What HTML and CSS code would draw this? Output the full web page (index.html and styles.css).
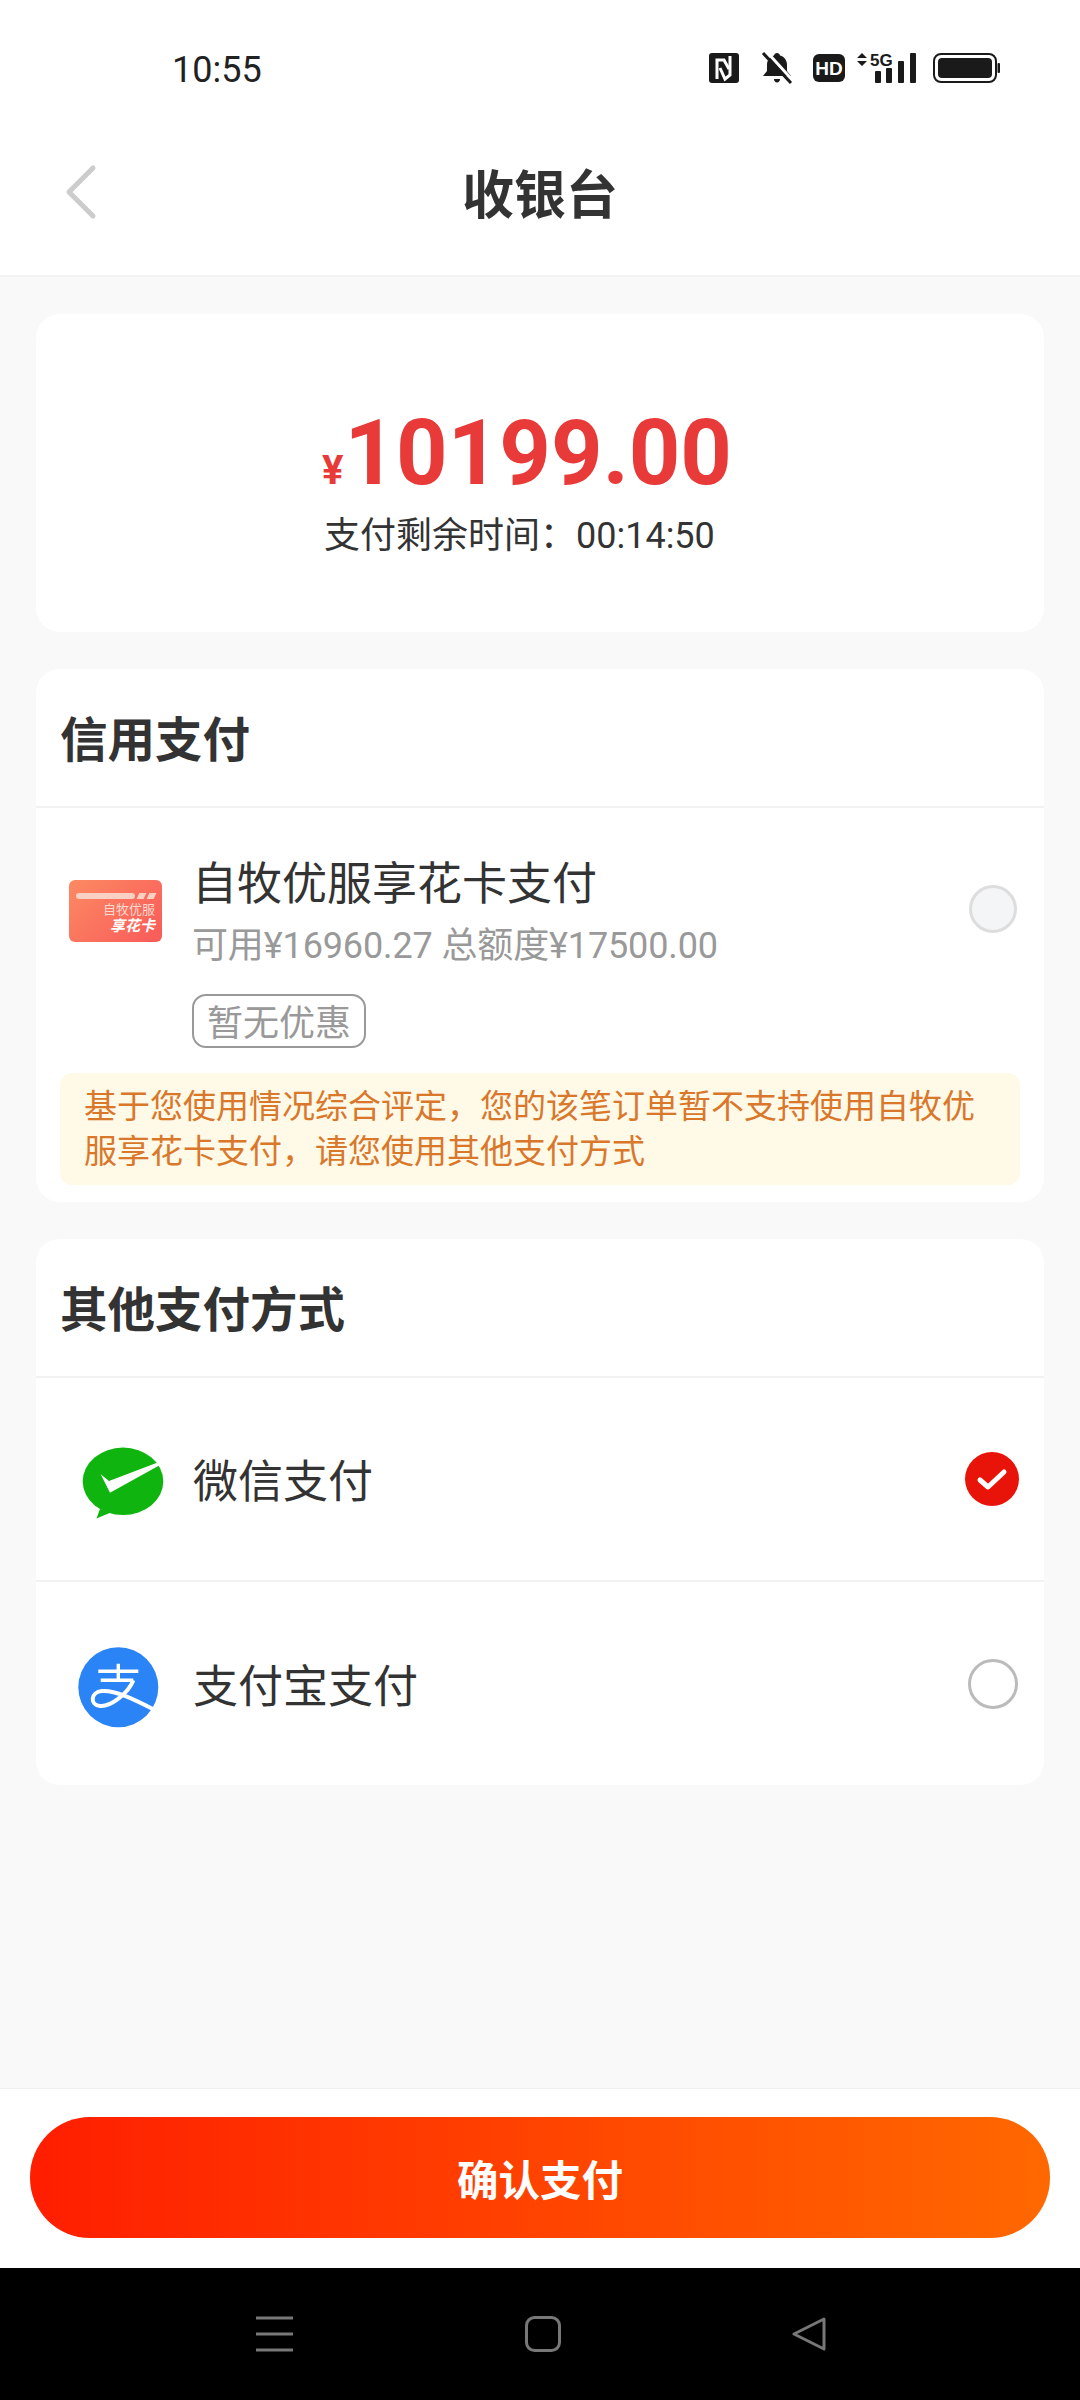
FILE: index.html
```html
<!DOCTYPE html>
<html lang="zh-CN">
<head>
  <meta charset="UTF-8">
  <meta name="viewport" content="width=device-width, initial-scale=1.0">
  <title>收银台</title>
  <link rel="stylesheet" href="styles.css">
</head>
<body>
  <div class="page">
    <div class="status-bar">
      <span class="clock">10:55</span>
      <div class="status-icons">
        <svg class="icon-nfc" width="30" height="30" viewBox="0 0 30 30">
          <rect width="30" height="30" rx="3" fill="#1a1a1a"/>
          <path d="M8 26V7h7l5 9" fill="none" stroke="#fff" stroke-width="3"/>
          <path d="M21 3v19l-5 4-5-11" fill="none" stroke="#fff" stroke-width="3"/>
        </svg>
        <svg class="icon-bell" width="32" height="32" viewBox="0 0 32 32">
          <path d="M16 1c1.600 0 2.700 1 3 2.500 4.500 1 7 5 7 9.500v6l4 5H2l4-5v-6c0-4.500 2.500-8.500 7-9.500C13.300 2 14.400 1 16 1z" fill="#1a1a1a"/>
          <path d="M13 27h6c0 2.200-1.300 3.500-3 3.500S13 29.200 13 27z" fill="#1a1a1a"/>
          <path d="M5 -1l29 32" stroke="#fff" stroke-width="3"/>
          <path d="M2 1l28 30" stroke="#1a1a1a" stroke-width="3"/>
        </svg>
        <svg class="icon-hd" width="32" height="28" viewBox="0 0 32 28">
          <rect width="32" height="28" rx="6" fill="#1a1a1a"/>
          <text x="16" y="20.500" text-anchor="middle" class="hd-text">HD</text>
        </svg>
        <svg class="icon-signal" width="60" height="38" viewBox="0 -4 60 38">
          <path d="M0 5l5-5 5 5zM0 8l5 5 5-5z" fill="#1a1a1a"/>
          <text x="13" y="13" class="net-text">5G</text>
          <rect x="18" y="18" width="6" height="12" rx="1" fill="#1a1a1a"/>
          <rect x="29" y="15" width="6" height="15" rx="1" fill="#1a1a1a"/>
          <rect x="41" y="8" width="6" height="22" rx="1" fill="#1a1a1a"/>
          <rect x="53" y="0" width="6" height="30" rx="1" fill="#1a1a1a"/>
        </svg>
        <svg class="icon-battery" width="67" height="30" viewBox="0 0 67 30">
          <rect x="1" y="1" width="62" height="28" rx="7" fill="none" stroke="#1a1a1a" stroke-width="2"/>
          <rect x="5" y="5" width="54" height="20" rx="4" fill="#1a1a1a"/>
          <rect x="64.500" y="10" width="2.500" height="10" rx="1" fill="#1a1a1a"/>
        </svg>
      </div>
    </div>

    <div class="header">
      <svg class="back" width="60" height="60" viewBox="0 0 60 60">
        <path d="M43 6L19 30l24 24" fill="none" stroke="#ccc" stroke-width="5" stroke-linecap="round" stroke-linejoin="round"/>
      </svg>
      <h1 class="title">收银台</h1>
    </div>

    <div class="main">
      <div class="card amount-card">
        <div class="amount"><span class="currency">¥</span><span class="number">10199.00</span></div>
        <div class="countdown">支付剩余时间：00:14:50</div>
      </div>

      <div class="card">
        <div class="card-title">信用支付</div>
        <div class="credit-row">
          <div class="credit-logo">
            <div class="credit-stripe"><i></i><b></b><b></b></div>
            <div class="credit-name">自牧优服</div>
            <div class="credit-brand">享花卡</div>
          </div>
          <div class="credit-info">
            <div class="method-name">自牧优服享花卡支付</div>
            <div class="credit-limit">可用¥16960.27 总额度¥17500.00</div>
            <span class="tag">暂无优惠</span>
          </div>
          <span class="radio radio-disabled"></span>
        </div>
        <div class="notice">基于您使用情况综合评定，您的该笔订单暂不支持使用自牧优服享花卡支付，请您使用其他支付方式</div>
      </div>

      <div class="card">
        <div class="card-title">其他支付方式</div>
        <div class="pay-row">
          <svg class="pay-icon" width="90" height="90" viewBox="28 13 90 90">
            <ellipse cx="73" cy="60.300" rx="40.300" ry="33.700" fill="#10b40f"/>
            <path d="M50 88L46.500 97.500 62 91z" fill="#10b40f"/>
            <path d="M50.700 53.300L59 60 107 41.700 110 44 60 71.700z" fill="#fff"/>
          </svg>
          <span class="method-name">微信支付</span>
          <span class="radio radio-checked">
            <svg width="54" height="54" viewBox="0 0 54 54">
              <path d="M15 28l8 7 16-15" fill="none" stroke="#fff" stroke-width="5" stroke-linecap="round" stroke-linejoin="round"/>
            </svg>
          </span>
        </div>
        <div class="pay-row">
          <svg class="pay-icon" width="90" height="90" viewBox="28 217 90 90">
            <circle cx="68.300" cy="265.300" r="40" fill="#2b84f6"/>
            <g fill="none" stroke="#fff" stroke-width="3.400">
              <path d="M48.300 249.300h40M68.300 241.700v16.600M50.700 258.300h32.600"/>
              <path d="M83.300 258.300C78 272 60 285 50 284C40 283 40 270 52 269C66 268 85 278 107 289" stroke-width="4"/>
            </g>
          </svg>
          <span class="method-name">支付宝支付</span>
          <span class="radio"></span>
        </div>
      </div>
    </div>

    <div class="footer">
      <button class="confirm">确认支付</button>
    </div>

    <div class="nav-bar">
      <svg width="37" height="36" viewBox="0 0 37 36">
        <path d="M0 2h37M0 18h37M0 34h37" stroke="#777" stroke-width="3"/>
      </svg>
      <svg width="36" height="36" viewBox="0 0 36 36">
        <rect x="1.500" y="1.500" width="33" height="33" rx="8" fill="none" stroke="#777" stroke-width="3"/>
      </svg>
      <svg width="34" height="36" viewBox="0 0 34 36">
        <path d="M32 3L2 18l30 15z" fill="none" stroke="#777" stroke-width="3" stroke-linejoin="round"/>
      </svg>
    </div>
  </div>
</body>
</html>
```

FILE: styles.css
```css
* {
  box-sizing: border-box;
}

body {
  margin: 0;
  font-family: Roboto, "Noto Sans CJK SC", sans-serif;
  color: #333;
}

.page {
  width: 1080px;
  height: 2400px;
  display: flex;
  flex-direction: column;
  background-color: #f9f9f9;
  overflow: hidden;
}

/* status bar */
.status-bar {
  height: 112px;
  flex-shrink: 0;
  display: flex;
  align-items: flex-start;
  justify-content: space-between;
  padding: 48px 80px 0 172px;
  background-color: #fff;
}

.clock {
  margin-top: 2px;
  font-size: 36px;
  line-height: 40px;
  color: #222;
}

.status-icons {
  display: flex;
  align-items: center;
  height: 40px;
}

.icon-bell {
  margin-left: 22px;
}

.icon-hd {
  margin-left: 20px;
}

.icon-signal {
  margin-left: 12px;
}

.icon-battery {
  margin-left: 16px;
}

.hd-text {
  font-family: "Liberation Sans", sans-serif;
  font-size: 19px;
  font-weight: bold;
  fill: #fff;
}

.net-text {
  font-family: "Liberation Sans", sans-serif;
  font-size: 17px;
  font-weight: bold;
  fill: #1a1a1a;
}

/* header */
.header {
  height: 165px;
  flex-shrink: 0;
  display: flex;
  align-items: center;
  justify-content: center;
  position: relative;
  padding-bottom: 4px;
  background-color: #fff;
  border-bottom: 2px solid #f3f3f3;
}

.back {
  position: absolute;
  left: 50px;
  top: 50px;
}

.title {
  margin: 0;
  font-size: 52px;
  font-weight: bold;
  color: #333;
}

/* cards */
.main {
  flex: 1;
  display: flex;
  flex-direction: column;
  gap: 37px;
  padding: 37px 36px 0;
}

.card {
  background-color: #fff;
  border-radius: 24px;
}

.amount-card {
  height: 318px;
  padding: 90px 0 0 286px;
}

.amount {
  font-size: 90px;
  line-height: 100px;
  color: #e83a38;
  font-weight: bold;
  white-space: nowrap;
}

.currency {
  font-size: 40px;
  line-height: 1;
  margin-right: 1px;
}

.countdown {
  margin: 8px 0 0 2px;
  font-size: 36px;
  line-height: 48px;
  color: #333;
}

.card-title {
  height: 139px;
  padding: 0 0 2px 24px;
  display: flex;
  align-items: center;
  font-size: 47.5px;
  font-weight: bold;
  color: #333;
  border-bottom: 2px solid #f2f2f2;
}

/* credit method */
.credit-row {
  display: flex;
  align-items: flex-start;
  padding: 47px 27px 0 33px;
}

.credit-logo {
  width: 93px;
  height: 62px;
  flex-shrink: 0;
  margin-top: 25px;
  padding: 13px 7px 0;
  border-radius: 6px;
  background: linear-gradient(135deg, #fc8a62, #f95a5a);
  color: #fff;
  text-align: right;
  overflow: hidden;
}

.credit-stripe {
  display: flex;
  gap: 3px;
  height: 6px;
  margin-bottom: 3px;
}

.credit-stripe i {
  flex: 1;
  border-radius: 3px;
  background-color: #fbd0c4;
}

.credit-stripe b {
  width: 7px;
  background-color: #fbd0c4;
  transform: skewX(-25deg);
}

.credit-name {
  font-size: 13px;
  line-height: 15px;
  color: #fcd9cf;
  white-space: nowrap;
}

.credit-brand {
  font-size: 15px;
  line-height: 19px;
  font-weight: bold;
  font-style: italic;
  white-space: nowrap;
}

.credit-info {
  flex: 1;
  margin-left: 30px;
}

.method-name {
  font-size: 45px;
  line-height: 60px;
  color: #333;
}

.credit-limit {
  margin-top: 6px;
  font-size: 36px;
  line-height: 50px;
  letter-spacing: -0.13px;
  color: #999;
}

.tag {
  display: block;
  width: fit-content;
  margin-top: 23px;
  padding: 0 13px;
  height: 54px;
  line-height: 56px;
  font-size: 36px;
  color: #999;
  border: 2px solid #999;
  border-radius: 14px;
}

.notice {
  margin: 25px 24px 17px;
  padding: 11px 24px;
  font-size: 33px;
  line-height: 45px;
  color: #d9772b;
  background-color: #fff9e8;
  border-radius: 12px;
}

/* radios */
.radio {
  flex-shrink: 0;
  width: 50px;
  height: 50px;
  border: 3px solid #bbb;
  border-radius: 50%;
}

.radio-disabled {
  width: 48px;
  height: 48px;
  margin-top: 30px;
  border-color: #ddd;
  background-color: #f4f5f7;
}

.radio-checked {
  width: 54px;
  height: 54px;
  margin-right: -1px;
  border: none;
  background-color: #e8140a;
}

/* other methods */
.pay-row {
  height: 204px;
  display: flex;
  align-items: center;
  padding-right: 26px;
  border-bottom: 2px solid #f2f2f2;
}

.pay-row:last-child {
  height: 203px;
  border-bottom: none;
}

.pay-icon {
  margin: 0 25px 0 42px;
  flex-shrink: 0;
}

.pay-row .method-name {
  flex: 1;
  padding-top: 8px;
}

/* bottom */
.footer {
  height: 180px;
  flex-shrink: 0;
  padding: 28px 30px 0;
  background-color: #fff;
  border-top: 1px solid #f0f0f0;
}

.confirm {
  display: block;
  width: 100%;
  height: 121px;
  border: none;
  border-radius: 60px;
  background: linear-gradient(90deg, #ff1e00, #ff6800);
  color: #fff;
  font-family: inherit;
  font-size: 41.5px;
  font-weight: bold;
}

.nav-bar {
  height: 132px;
  flex-shrink: 0;
  display: flex;
  justify-content: space-between;
  align-items: flex-start;
  padding: 48px 254px 0 256px;
  background-color: #000;
}
```
